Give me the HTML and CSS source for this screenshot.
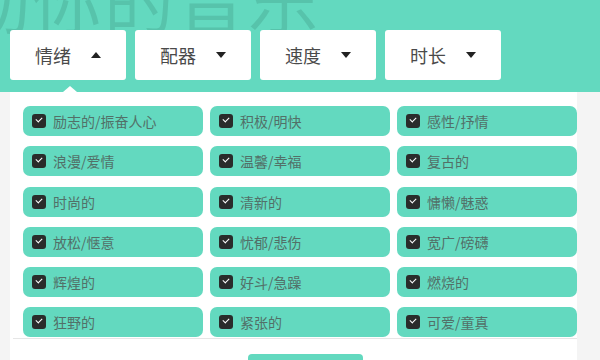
FILE: index.html
```html
<!doctype html>
<html lang="zh-CN">
<head>
	<meta charset="UTF-8">
	<title>音乐筛选</title>
	<link rel="stylesheet" href="styles.css">
</head>
<body>
	<div class="top">
		<h1 class="bigtitle">打动你的音乐</h1>
		<div class="filters">
			<div class="drop">情绪<span class="arrow up"></span></div>
			<div class="drop">配器<span class="arrow"></span></div>
			<div class="drop">速度<span class="arrow"></span></div>
			<div class="drop">时长<span class="arrow"></span></div>
		</div>
	</div>
	<div class="panel">
		<span class="notch"></span>
		<div class="tags">
			<label class="tag"><i class="chk"></i>励志的/振奋人心</label>
			<label class="tag"><i class="chk"></i>积极/明快</label>
			<label class="tag"><i class="chk"></i>感性/抒情</label>
			<label class="tag"><i class="chk"></i>浪漫/爱情</label>
			<label class="tag"><i class="chk"></i>温馨/幸福</label>
			<label class="tag"><i class="chk"></i>复古的</label>
			<label class="tag"><i class="chk"></i>时尚的</label>
			<label class="tag"><i class="chk"></i>清新的</label>
			<label class="tag"><i class="chk"></i>慵懒/魅惑</label>
			<label class="tag"><i class="chk"></i>放松/惬意</label>
			<label class="tag"><i class="chk"></i>忧郁/悲伤</label>
			<label class="tag"><i class="chk"></i>宽广/磅礴</label>
			<label class="tag"><i class="chk"></i>辉煌的</label>
			<label class="tag"><i class="chk"></i>好斗/急躁</label>
			<label class="tag"><i class="chk"></i>燃烧的</label>
			<label class="tag"><i class="chk"></i>狂野的</label>
			<label class="tag"><i class="chk"></i>紧张的</label>
			<label class="tag"><i class="chk"></i>可爱/童真</label>
		</div>
		<div class="foot">
			<button class="ok">确定</button>
		</div>
	</div>
</body>
</html>
```

FILE: styles.css
```css
body{margin: 0;
	background-color: #f4f4f4;
	font-family: "Noto Sans CJK SC", "Noto Sans", sans-serif;
	height: 360px;
	overflow: hidden;}

.top{position: relative;
	height: 92px;
	background-color: #63d9bf;
	overflow: hidden;}

.bigtitle{position: absolute;
	left: -112px;
	top: -36px;
	margin: 0;
	font-size: 70px;
	line-height: 70px;
	font-weight: normal;
	letter-spacing: 2px;
	color: rgba(40,110,95,0.2);
	white-space: nowrap;}

.filters{position: relative;
	display: flex;
	gap: 9px;
	padding: 30px 0 0 10px;}

.drop{width: 116px;
	height: 50px;
	box-sizing: border-box;
	background-color: #fff;
	border-radius: 3px;
	display: flex;
	align-items: center;
	justify-content: center;
	gap: 20px;
	font-size: 18px;
	color: #4a4a4a;}

.arrow{width: 0;
	height: 0;
	border-left: 5px solid transparent;
	border-right: 5px solid transparent;
	border-top: 6px solid #222;}
.arrow.up{border-top: 0;
	border-bottom: 6px solid #222;}

.panel{position: relative;
	width: 567px;
	margin-left: 10px;
	box-sizing: border-box;
	background-color: #fff;
	padding: 14px 0 0 13px;
	height: 268px;}

.notch{position: absolute;
	left: 53px;
	top: -6px;
	border-left: 7px solid transparent;
	border-right: 7px solid transparent;
	border-bottom: 6px solid #fff;}

.tags{display: grid;
	grid-template-columns: repeat(3, 180px);
	column-gap: 7px;
	row-gap: 10.3px;}

.tag{height: 30px;
	background-color: #63d9bf;
	border-radius: 7px;
	display: flex;
	align-items: center;
	padding-left: 9px;
	font-size: 14px;
	color: #527068;}

.chk{position: relative;
	width: 14px;
	height: 14px;
	border-radius: 3px;
	background-color: #2a2c2b;
	margin-right: 7px;}
.chk::after{content: "";
	position: absolute;
	left: 4px;
	top: 3px;
	width: 5px;
	height: 3px;
	border-left: 1.5px solid #fff;
	border-bottom: 1.5px solid #fff;
	transform: rotate(-45deg);}

.foot{margin: 1px 0 0 -10px;
	border-top: 1px solid #e6e6e6;
	padding: 15px 0 0 235px;}

.ok{width: 115px;
	height: 34px;
	border: 0;
	border-radius: 4px;
	background-color: #63d9bf;
	color: #fff;
	font-size: 15px;}
```
